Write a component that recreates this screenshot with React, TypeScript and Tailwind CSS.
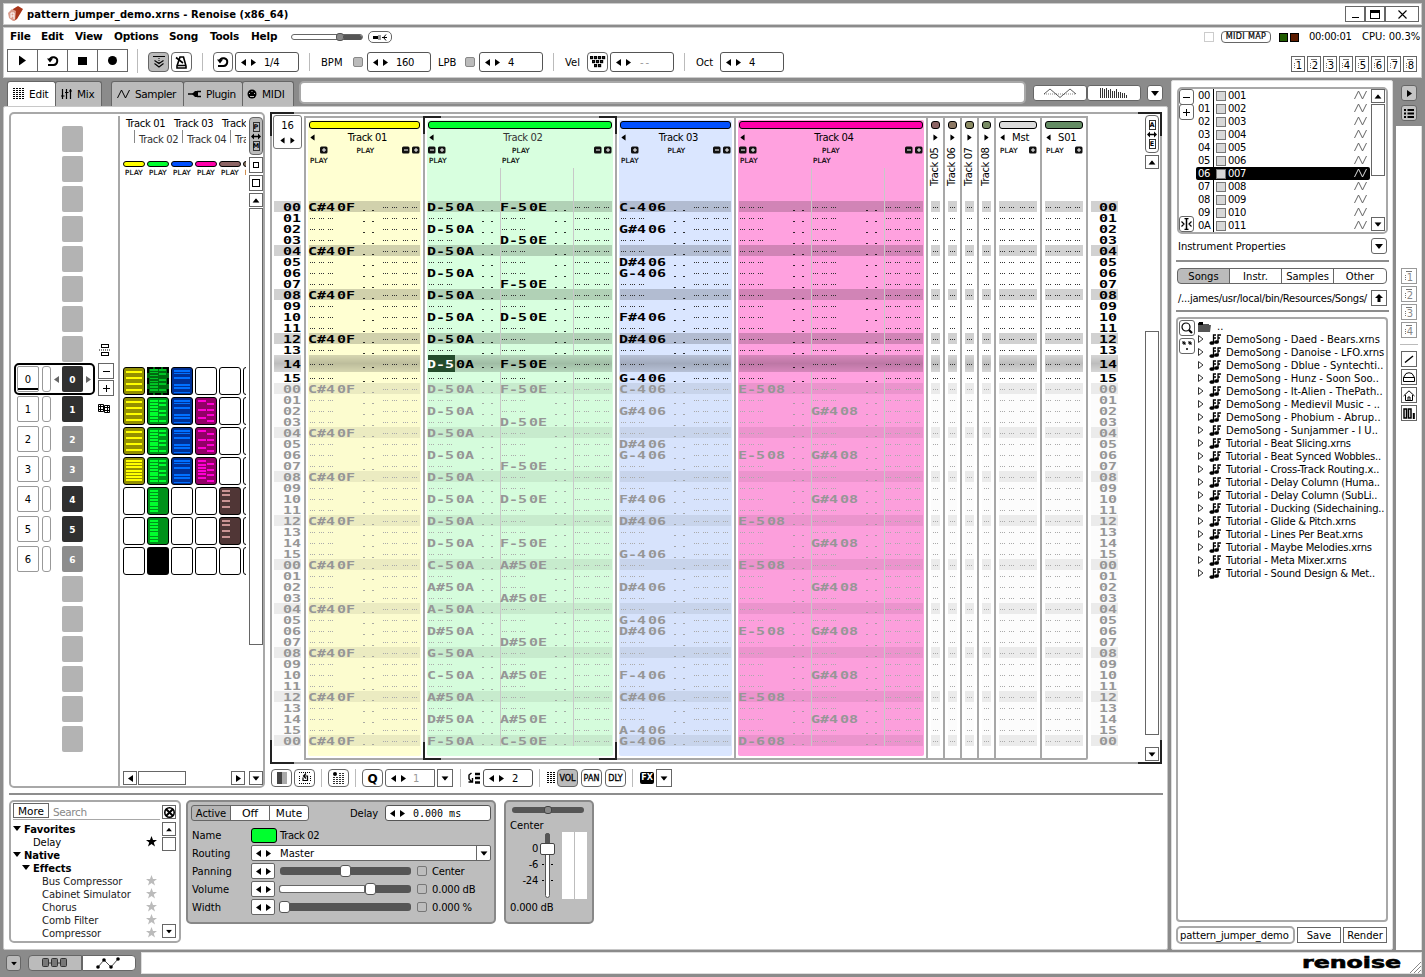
import React from "react";

type Dir = "l" | "r" | "u" | "d";
const triPoints: Record<Dir, string> = {
  l: "5,0 5,7 0,3.5",
  r: "0,0 0,7 5,3.5",
  u: "0,5 8,5 4,0",
  d: "0,0 8,0 4,5",
};

function Tri({ d, className = "" }: { d: Dir; className?: string }) {
  const v = d === "u" || d === "d";
  return (
    <svg className={"shrink-0 " + className} width={v ? 8 : 5} height={v ? 5 : 7} fill="currentColor">
      <polygon points={triPoints[d]} />
    </svg>
  );
}

function Btn({ className = "", children }: { className?: string; children?: React.ReactNode }) {
  return <div className={"flex shrink-0 items-center justify-center border border-[#666] " + className}>{children}</div>;
}

function Num({ value, className = "" }: { value: string; className?: string }) {
  return (
    <div className={"flex h-5 shrink-0 items-center rounded-[3px] border border-[#555] bg-white pl-[5px] " + className}>
      <Tri d="l" />
      <Tri d="r" className="ml-[5px]" />
      <span className="ml-[8px] tracking-[-0.3px]">{value}</span>
    </div>
  );
}

function Sep({ className = "" }: { className?: string }) {
  return <div className={"w-px shrink-0 bg-[#bbb] " + className} />;
}

/* ---------- title and transport ---------- */

function TitleBar() {
  return (
    <div className="flex h-[22px] w-[1419px] items-center border border-[#ccc] bg-white">
      <svg width="16" height="18" className="ml-[3px]" viewBox="0 0 16 18">
        <polygon points="6,4 11,1 16,4 10,14 7,16" fill="#a83418" />
        <polygon points="1,8 5,4 9,6 8,16 6,16 2,13" fill="#d99c8c" />
        <path d="M4 13 V8 H7 V14 M4 11 H7" stroke="#fff" fill="none" />
      </svg>
      <span className="ml-[4px] mt-[1px] flex-1 text-[10px] font-bold tracking-[0.05px]">pattern_jumper_demo.xrns - Renoise (x86_64)</span>
      <Btn className="h-4 w-5">
        <div className="mt-[6px] h-px w-[7px] bg-black" />
      </Btn>
      <Btn className="h-4 w-5">
        <div className="h-[9px] w-[10px] border border-t-[3px] border-black" />
      </Btn>
      <Btn className="mr-[2px] h-4 w-[34px]">
        <svg width="9" height="9" stroke="#000" strokeWidth="1.1">
          <path d="M0.5 0.5 L8.5 8.5 M8.5 0.5 L0.5 8.5" />
        </svg>
      </Btn>
    </div>
  );
}

function LoopIcon() {
  return (
    <svg width="12" height="12" viewBox="0 0 12 12" fill="none" stroke="#000" strokeWidth="2">
      <path d="M2.6 5 A3.9 3.9 0 1 1 6 10 M1 10 H6.5" />
      <polygon points="0,3.5 6,3.5 3,7.5" fill="#000" stroke="none" />
    </svg>
  );
}

function Transport() {
  const menu = [
    ["File", "w-[31px]"],
    ["Edit", "w-[34px]"],
    ["View", "w-[39px]"],
    ["Options", "w-[55px]"],
    ["Song", "w-[41px]"],
    ["Tools", "w-[41px]"],
    ["Help", "w-[40px]"],
  ];
  return (
    <div className="mt-[2px] flex h-[51px] w-[1419px] flex-col border border-[#ccc] bg-white">
      <div className="flex h-[18px] items-center pl-[6px]">
        {menu.map(([m, w]) => (
          <span key={m} className={"shrink-0 pb-[2px] text-[10.5px] font-bold tracking-[-0.2px] " + w}>
            {m}
          </span>
        ))}
        <div className="flex h-[6px] w-[72px] items-center rounded-full border border-[#666] bg-white">
          <div className="ml-[44px] h-[8px] w-[8px] shrink-0 rounded-[3px] border border-[#555] bg-[#888]" />
          <div className="h-[5px] flex-1 rounded-r-full bg-[#555]" />
        </div>
        <Btn className="ml-[5px] h-3 w-6 rounded-[5px]">
          <svg width="14" height="7" viewBox="0 0 14 7">
            <rect x="0" y="2" width="5" height="3" fill="#000" />
            <rect x="5" y="1" width="3" height="5" fill="#999" />
            <path d="M9 3.5 H14 M13 0.5 L10.5 3.5 L13 6.5" stroke="#000" fill="none" />
          </svg>
        </Btn>
        <div className="ml-[812px] h-[10px] w-[10px] border border-[#ccc]" />
        <Btn className="ml-[7px] h-[12px] w-[50px] rounded-[4px] text-[8px] [-webkit-text-stroke:0.2px_#000]">
          <span className="whitespace-nowrap tracking-[0.35px]">MIDI MAP</span>
        </Btn>
        <div className="ml-[8px] h-[9px] w-[9px] border border-black bg-[#205c00]" />
        <div className="ml-[2px] h-[9px] w-[9px] border border-black bg-[#5c1c00]" />
        <span className="ml-[10px] w-[53px] tracking-[-0.3px]">00:00:01</span>
        <span className="whitespace-nowrap tracking-[-0.05px]">CPU: 00.3%</span>
      </div>
      <div className="flex h-[29px] items-center pl-[3px] [&_span]:pt-[2px]">
        <Btn className="h-[23px] w-[31px]"><Tri d="r" className="scale-[1.4]" /></Btn>
        <Btn className="-ml-px h-[23px] w-[31px]"><LoopIcon /></Btn>
        <Btn className="-ml-px h-[23px] w-[31px]"><div className="h-[8px] w-[9px] bg-black" /></Btn>
        <Btn className="-ml-px h-[23px] w-[31px]"><div className="h-[9px] w-[9px] rounded-full bg-black" /></Btn>
        <Sep className="ml-[9px] h-6" />
        <Btn className="ml-[10px] mt-[3px] h-5 w-[21px] rounded-[4px] bg-[#bbb]">
          <svg width="12" height="12" fill="none" stroke="#000">
            <path d="M0 0.5 H12 M1.5 4.5 L6 7.5 L10.5 4.5 M1.5 7.5 L6 11 L10.5 7.5" strokeWidth="1.1" />
            <path d="M6 2 V8" strokeDasharray="1 1" />
          </svg>
        </Btn>
        <Btn className="ml-[2px] mt-[3px] h-5 w-[21px] rounded-[4px]">
          <svg width="13" height="13" viewBox="0 0 13 13">
            <path d="M5 1 H8.5 L11 10 V12 H2 V10 Z" fill="none" stroke="#000" strokeWidth="1.6" />
            <path d="M3 9.5 H11 M8 7 L1 1.5" stroke="#000" strokeWidth="1.6" />
          </svg>
        </Btn>
        <div className="ml-[10px] mt-[3px] flex items-center">
          <Sep className="h-[18px]" />
          <Btn className="ml-[10px] h-5 w-5 rounded-[4px]"><LoopIcon /></Btn>
          <Num value="1/4" className="ml-[2px] w-16" />
          <Sep className="ml-[10px] h-[18px]" />
          <span className="ml-[11px] w-8">BPM</span>
          <div className="h-[10px] w-[10px] rounded-[2px] border border-[#888] bg-[#bbb]" />
          <Num value="160" className="ml-[4px] w-16" />
          <span className="ml-[7px] w-[27px]">LPB</span>
          <div className="h-[10px] w-[10px] rounded-[2px] border border-[#888] bg-[#bbb]" />
          <Num value="4" className="ml-[4px] w-16" />
          <Sep className="ml-[10px] h-[18px]" />
          <span className="ml-[11px] w-[22px]">Vel</span>
          <Btn className="h-5 w-[21px] rounded-[4px]">
            <svg width="16" height="12" fill="none" stroke="#000" strokeWidth="1.2">
              {[0, 4, 8, 12].map((x) => <rect key={x} x={x + 0.6} y="0.6" width="2" height="2" />)}
              {[2, 6, 10].map((x) => <rect key={x} x={x + 0.6} y="4.6" width="2" height="2" />)}
              {[4, 8].map((x) => <rect key={x} x={x + 0.6} y="8.6" width="2" height="2" />)}
            </svg>
          </Btn>
          <div className="ml-[2px] flex h-5 w-16 items-center rounded-[3px] border border-[#555] pl-[5px]">
            <Tri d="l" />
            <Tri d="r" className="ml-[5px]" />
            <span className="ml-[9px] tracking-[2px] text-[#999]">--</span>
          </div>
          <Sep className="ml-[10px] h-[18px]" />
          <span className="ml-[11px] w-6">Oct</span>
          <Num value="4" className="w-16" />
        </div>
        <div className="ml-auto mr-[4px] mt-[7px] flex gap-[2px]">
          {[1, 2, 3, 4, 5, 6, 7, 8].map((n) => <Preset key={n} n={n} className="h-4 w-[14px] border-[#666] text-black" />)}
        </div>
      </div>
    </div>
  );
}

function Preset({ n, className }: { n: number; className: string }) {
  return (
    <div className={"flex flex-col items-center border " + className}>
      <div className="mt-[2px] h-px w-[6px] shrink-0 bg-[#777]" />
      <div className="flex items-center">
        <div className="mr-px h-[6px] w-px bg-[repeating-linear-gradient(#777_0_1px,transparent_1px_2px)]" />
        <div className="pt-px text-[10px] leading-[10px]">{n}</div>
      </div>
    </div>
  );
}

/* ---------- tabs ---------- */

function ZigZag({ className = "" }: { className?: string }) {
  return (
    <svg className={className} width="13" height="10" viewBox="0 0 13 10" fill="none" stroke="currentColor">
      <path d="M0.5 9 L4.5 1 L8.5 9 L12.5 1" />
    </svg>
  );
}

function Tabs() {
  const tab = "flex h-[25px] items-center rounded-t-[3px] border border-b-0 border-[#666] text-[10.5px] ";
  return (
    <div className="flex h-[28px] items-end pl-[4px]">
      <div className={tab + "w-[49px] bg-white"}>
        <svg width="11" height="12" className="ml-[5px]">
          {[1, 4, 7, 10].map((x) => <path key={x} d={`M${x} 0 V12`} stroke="#000" strokeWidth="2" strokeDasharray="1 1" />)}
        </svg>
        <span className="ml-[5px] tracking-[-0.2px]">Edit</span>
      </div>
      <div className={tab + "-ml-px w-[47px] bg-[#bbb]"}>
        <svg width="11" height="11" stroke="#000" strokeWidth="1.2" className="ml-[5px]">
          <path d="M1.5 0 V10 M5.5 0 V10 M9.5 0 V10 M0 7 H3.5 M4 3.5 H7.5 M8 2 H11.5" />
        </svg>
        <span className="ml-[5px] tracking-[-0.2px]">Mix</span>
      </div>
      <div className={tab + "ml-[9px] w-[73px] bg-[#bbb]"}>
        <ZigZag className="ml-[5px]" />
        <span className="ml-[5px] tracking-[-0.4px]">Sampler</span>
      </div>
      <div className={tab + "-ml-px w-[60px] bg-[#bbb]"}>
        <svg width="14" height="8" className="ml-[4px]">
          <path d="M0 4 H5 M9 1.5 H13 M9 6.5 H13" stroke="#000" strokeWidth="1.4" />
          <path d="M4 4 L7 1 H10 V7 H7 Z" fill="#000" />
        </svg>
        <span className="ml-[4px] tracking-[-0.4px]">Plugin</span>
      </div>
      <div className={tab + "-ml-px w-[52px] bg-[#bbb]"}>
        <svg width="10" height="10" className="ml-[4px]">
          <circle cx="5" cy="5" r="4.5" />
          <path d="M2 4.5 H3 M7 4.5 H8 M4.5 2.5 H5.5 M3 7.5 H7" stroke="#bbb" />
        </svg>
        <span className="ml-[5px] tracking-[-0.2px]">MIDI</span>
      </div>
      <div className="mb-[2px] ml-[5px] h-[23px] w-[727px] rounded-[5px] border-2 border-[#a8a8a8] bg-white" />
      <Btn className="mb-[5px] ml-[7px] h-4 w-[54px] rounded-[3px] bg-white">
        <svg width="34" height="10" fill="none" stroke="#333">
          <path d="M1 6 L7 1 L17 9.5 L27 1 L33 6" strokeWidth="0.8" />
          <path d="M1 6 H33" strokeWidth="0.6" strokeDasharray="1 1" />
        </svg>
      </Btn>
      <Btn className="mb-[5px] h-4 w-[54px] rounded-[3px] bg-white">
        <svg width="28" height="10" stroke="#333">
          {[0, 0, 1, 0, 2, 1, 3, 3, 1, 4, 4, 5, 5, 7].map((t, i) => <path key={i} d={`M${i * 2 + 0.5} ${t} V10`} />)}
        </svg>
      </Btn>
      <Btn className="mb-[5px] ml-[6px] h-4 w-4 rounded-[3px] bg-white"><Tri d="d" /></Btn>
    </div>
  );
}

/* ---------- pattern matrix ---------- */

const evens = [0, 2, 4, 6, 8, 10, 12, 14];
const greenB = [0, 3, 7, 10, 14];
type CellKind = "y" | "y2" | "g" | "g1" | "b" | "p" | "p2" | "n" | "k" | "s" | "";
const cellStyle: Record<string, { bg: string; line: string; cols: number[][] }> = {
  y: { bg: "bg-[#939000]", line: "bg-[#ffff00]", cols: [[1, 5, 9, 13]] },
  y2: { bg: "bg-[#939000]", line: "bg-[#ffff00]", cols: [[0, 2, 4, 7, 9, 11, 13]] },
  g: { bg: "bg-[#00911a]", line: "bg-[#00ff2e]", cols: [evens, greenB] },
  s: { bg: "bg-[#006a10]", line: "bg-[#00c424]", cols: [evens, greenB] },
  g1: { bg: "bg-[#00911a]", line: "bg-[#00ff2e]", cols: [evens, []] },
  b: { bg: "bg-[#003095]", line: "bg-[#0070ff]", cols: [[0, 2, 5, 10, 12, 15]] },
  p: { bg: "bg-[#920066]", line: "bg-[#ff00d4]", cols: [[0, 6, 12], [2, 6, 10, 14]] },
  p2: { bg: "bg-[#920066]", line: "bg-[#ff00d4]", cols: [[0, 3, 5, 7, 9, 12], [2, 6, 10, 14]] },
  n: { bg: "bg-[#503636]", line: "bg-[#cc9494]", cols: [[0, 3, 7, 11], []] },
};

function Cell({ k }: { k: CellKind }) {
  if (k === "") return <div className="h-7 w-[22px] shrink-0 rounded-[3px] border border-black bg-white" />;
  if (k === "k") return <div className="h-7 w-[22px] shrink-0 rounded-[3px] bg-black" />;
  const c = cellStyle[k];
  const thin = k === "b" || k === "s";
  return (
    <div
      className={
        "flex h-7 w-[22px] shrink-0 gap-px " +
        c.bg +
        (k === "s" ? " border-2 border-dashed border-black px-px py-0" : " rounded-[3px] border border-black px-[2px] py-[2px]")
      }
    >
      {c.cols.map((col, i) => (
        <div key={i} className="flex flex-1 flex-col">
          {col.map((s, j) => (
            <div
              key={j}
              className={"shrink-0 " + c.line}
              style={{ height: thin ? 1.5 : 2, marginTop: j === 0 ? s * 1.45 : (s - col[j - 1]) * 1.45 - (thin ? 1.5 : 2) }}
            />
          ))}
        </div>
      ))}
    </div>
  );
}

const matrixRows: CellKind[][] = [
  ["y", "s", "b", "", "", ""],
  ["y", "g", "b", "p", "", ""],
  ["y", "g", "b", "p", "", ""],
  ["y2", "g", "b", "p2", "", ""],
  ["", "g1", "", "", "n", ""],
  ["", "g1", "", "", "n", ""],
  ["", "k", "", "", "", ""],
];

function SeqBlocks({ count }: { count: number }) {
  return (
    <>
      {Array.from({ length: count }, (_, i) => (
        <div key={i} className="ml-[51px] h-[26px] w-[21px] shrink-0 rounded-[2px] bg-[#b3b3b3]" />
      ))}
    </>
  );
}

function Matrix() {
  const bars = ["bg-[#ffff00]", "bg-[#00ff2e]", "bg-[#0050ff]", "bg-[#ff00aa]", "bg-[#8c6464]", "bg-[#8c7864]"];
  return (
    <div className="flex h-[676px] w-[256px] rounded-[5px] border-2 border-[#a8a8a8] bg-white">
      {/* sequence slots */}
      <div className="relative flex w-[85px] flex-col gap-[4px] pt-[12px]">
        <SeqBlocks count={8} />
        {[0, 1, 2, 3, 4, 5, 6].map((n) => (
          <div key={n} className="flex h-[26px] shrink-0 items-stretch pl-[6px]">
            <div className="flex w-[22px] flex-col items-center justify-center rounded-[2px] border border-[#999]">
              <span className={n === 0 ? "mt-[3px] leading-[14px]" : "leading-[14px]"}>{n}</span>
              {n === 0 && <div className="mt-px h-[2px] w-5 shrink-0 bg-black" />}
            </div>
            <div className="ml-[3px] w-[9px] rounded-[3px] border border-[#999]" />
            <div
              className={
                "ml-[11px] flex w-[21px] items-center justify-center rounded-[2px] pt-[2px] text-[9px] font-bold text-white " +
                ([2, 3, 6].includes(n) ? "bg-[#8d8d8d]" : "bg-[#303030]")
              }
            >
              {n}
            </div>
          </div>
        ))}
        <SeqBlocks count={6} />
        <div className="absolute left-[3px] top-[249px] flex h-8 w-[81px] items-center rounded-[5px] border-2 border-black text-[#666]">
          <Tri d="l" className="ml-[38px]" />
          <Tri d="r" className="ml-[27px]" />
        </div>
      </div>
      <div className="flex w-[22px] flex-col items-start pl-[2px] pt-[230px]">
        <svg width="12" height="12" fill="none" stroke="#000" className="ml-px shrink-0">
          <rect x="2.5" y="0.5" width="7" height="3" />
          <rect x="2.5" y="8.5" width="7" height="3" />
          <path d="M0 6 H12" strokeDasharray="1 1" />
        </svg>
        <Btn className="mt-[7px] h-4 w-4"><div className="h-px w-[7px] bg-black" /></Btn>
        <Btn className="mt-px h-4 w-4">
          <svg width="7" height="7" stroke="#000"><path d="M0 3.5 H7 M3.5 0 V7" /></svg>
        </Btn>
        <svg width="13" height="10" className="mt-[8px] shrink-0" fill="none" stroke="#000">
          <path d="M0.5 0.5 H5.5 V7.5 H0.5 Z M0.5 2.5 H5.5 M0.5 5.5 H5.5 M2.5 0 V8 M6.5 1.5 H11.5 V8.5 H6.5 Z M6.5 3.5 H12 M6.5 6.5 H12 M9.5 1 V9" />
        </svg>
      </div>
      <div className="mt-[2px] w-[2px] bg-[#a8a8a8]" />
      {/* track cells */}
      <div className="flex w-[129px] flex-col pl-[3px]">
        <div className="flex h-[16px] w-[123px] gap-[8px] overflow-hidden whitespace-nowrap pl-[3px] leading-[15px] tracking-[-0.35px]">
          {["Track 01", "Track 03", "Track 05"].map((t) => <span key={t} className="w-10 shrink-0">{t}</span>)}
        </div>
        <div className="flex h-[17px] w-[123px] overflow-hidden whitespace-nowrap pl-[11px] leading-[15px] tracking-[-0.35px] text-[#333]">
          {["Track 02", "Track 04", "Track 06"].map((t) => (
            <div key={t} className="flex w-12 shrink-0">
              <div className="h-[13px] w-px bg-[#888]" />
              <span className="ml-[4px]">{t}</span>
            </div>
          ))}
        </div>
        <div className="mt-[14px] flex w-[123px] shrink-0 gap-[2px] overflow-hidden">
          {bars.map((b) => (
            <div key={b} className="flex w-[22px] shrink-0 flex-col items-center">
              <div className={"h-[6px] w-[22px] shrink-0 rounded-[3px] border border-black " + b} />
              <span className="text-[7px] leading-[9px] tracking-[0.25px] text-black [-webkit-text-stroke:0.2px_#000]">PLAY</span>
            </div>
          ))}
        </div>
        <div className="mt-[189px] flex w-[123px] flex-col gap-[2px] overflow-hidden">
          {matrixRows.map((r, i) => (
            <div key={i} className="flex gap-[2px]">
              {r.map((k, j) => <Cell key={j} k={k} />)}
            </div>
          ))}
        </div>
        <div className="mb-px mt-auto flex h-[14px]">
          <Btn className="h-[14px] w-[14px]"><Tri d="l" /></Btn>
          <div className="ml-px h-[14px] w-[48px] border border-[#666]" />
          <Btn className="ml-[45px] h-[14px] w-[14px]"><Tri d="r" /></Btn>
        </div>
      </div>
      <div className="flex w-[14px] flex-col pt-[3px]">
        <Btn className="h-[38px] w-[14px] rounded-[4px] bg-[#bbb]"><RangeIcon top="P" bottom="M" /></Btn>
        <Btn className="mt-[2px] h-4 w-[14px]"><div className="h-[6px] w-[6px] border border-black" /></Btn>
        <Btn className="mt-[2px] h-4 w-[14px]"><div className="h-2 w-2 border border-black" /></Btn>
        <Btn className="mt-[2px] h-[14px] w-[14px]"><Tri d="u" className="scale-90" /></Btn>
        <div className="mt-px h-[437px] w-[14px] border border-[#666]" />
        <Btn className="mb-px mt-auto h-[14px] w-[14px]"><Tri d="d" className="scale-90" /></Btn>
      </div>
    </div>
  );
}

function RangeIcon({ top, bottom }: { top: string; bottom: string }) {
  return (
    <div className="flex flex-col items-center gap-px text-[6.5px] font-bold leading-[8px]">
      <div className="flex h-[10px] w-[7px] items-center justify-center border border-[#333]">{top}</div>
      <svg width="10" height="7"><path d="M0 3.5 L3 0.5 V2.8 H7 V0.5 L10 3.5 L7 6.5 V4.2 H3 V6.5 Z" /></svg>
      <div className="flex h-[10px] w-[7px] items-center justify-center border border-[#333]">{bottom}</div>
    </div>
  );
}

/* ---------- pattern editor ---------- */

type Notes = Record<number, string>;
const every = (steps: number[], n: string): Notes => Object.fromEntries(steps.map((s) => [s, n]));
const shift = (n: Notes, by: number): Notes => Object.fromEntries(Object.entries(n).map(([k, v]) => [Number(k) + by, v]));

const t2b: Notes = { 0: "F-50E", 3: "D-50E", 7: "F-50E", 10: "D-50E", 14: "F-50E" };
const t3: Notes = { 0: "C-406", 2: "G#406", 5: "D#406", 6: "G-406", 10: "F#406", 12: "D#406", 15: "G-406" };
const t1All = every([0, 4, 8, 12, 16, 20, 24, 28, 32, 36, 40, 44, 48], "C#40F");
const t2aAll: Notes = {
  ...every(evens, "D-50A"),
  ...shift(every(evens, "D-50A"), 16),
  32: "C-50A", 34: "A#50A", 36: "A-50A", 38: "D#50A", 40: "G-50A", 42: "C-50A", 44: "A#50A", 46: "D#50A", 48: "F-50A",
};
const t2bAll: Notes = { ...t2b, ...shift(t2b, 16), 32: "A#50E", 35: "A#50E", 39: "D#50E", 42: "A#50E", 46: "A#50E", 48: "C-50E" };
const t3All: Notes = { ...t3, ...shift(t3, 16), 34: "D#406", 37: "G-406", 38: "D#406", 42: "F-406", 44: "C#406", 47: "A-406", 48: "G-406" };
const t4aAll: Notes = { ...every([16, 22, 28, 32, 38, 44], "E-508"), 48: "D-608" };
const t4bAll: Notes = every([18, 22, 26, 30, 34, 38, 42, 46], "G#408");
const lines = Array.from({ length: 49 }, (_, i) => i);

function lineClass(i: number) {
  const tall = i === 14;
  const faded = i > 15;
  return (
    "flex shrink-0 items-center " +
    (tall
      ? "h-[17px] bg-[linear-gradient(rgba(0,0,0,.16),rgba(0,0,0,.26),rgba(0,0,0,.16))] "
      : i % 4 === 0
        ? faded ? "h-[11px] bg-black/[0.08] " : "h-[11px] bg-black/[0.18] "
        : faded ? "h-[11px] bg-black/[0.01] " : "h-[11px] ") +
    (faded ? "text-[#969696]" : "text-black")
  );
}

function Wide({ text, className = "" }: { text: string; className?: string }) {
  return (
    <span
      className={
        "shrink-0 origin-left scale-x-[1.36] whitespace-pre font-['DejaVu_Sans_Mono','Liberation_Mono',monospace] text-[11px] font-bold leading-[11px] " +
        className
      }
    >
      {text}
    </span>
  );
}

function Dots({ faded, className = "" }: { faded: boolean; className?: string }) {
  return (
    <div
      className={
        "h-px w-[5px] shrink-0 " +
        (faded
          ? "bg-[repeating-linear-gradient(90deg,#aaa_0_1px,transparent_1px_2px)] "
          : "bg-[repeating-linear-gradient(90deg,#333_0_1px,transparent_1px_2px)] ") +
        className
      }
    />
  );
}

function NoteCell({ note, faded, selected }: { note?: string; faded: boolean; selected?: boolean }) {
  return (
    <div className="flex h-full w-[72px] shrink-0 items-center">
      {note ? (
        <>
          <div className={"flex h-full w-[27px] shrink-0 items-center " + (selected ? "bg-[#244c2c] text-white" : "")}>
            <Wide text={note.slice(0, 3)} className="-ml-px w-[20px]" />
          </div>
          <Wide text={note.slice(3)} className="ml-px w-[26px]" />
        </>
      ) : (
        <>
          <Dots faded={faded} className="ml-px mt-px" />
          <Dots faded={faded} className="ml-[4px] mt-px" />
          <Dots faded={faded} className="ml-[4px] mr-[30px] mt-px" />
        </>
      )}
      <div className="mt-[8px] h-px w-[2px] bg-current opacity-80" />
      <div className="ml-[7px] mt-[8px] h-px w-[2px] bg-current opacity-80" />
    </div>
  );
}

function FxCell({ faded }: { faded: boolean }) {
  return (
    <div className="flex items-center pt-px">
      <Dots faded={faded} className="ml-px" />
      <Dots faded={faded} className="ml-[4px]" />
      <Dots faded={faded} className="ml-[6px]" />
      <Dots faded={faded} className="ml-[4px]" />
    </div>
  );
}

function Box({ plus }: { plus?: boolean }) {
  return (
    <svg width="8" height="8" viewBox="0 0 8 8" className="shrink-0">
      <rect y="0.5" width="7.5" height="7" rx="1.5" fill="#111" />
      <path d={plus ? "M2 4 H6 M4 2 V6" : "M2 4 H6"} stroke="#fff" />
    </svg>
  );
}

interface TrackProps {
  name: string;
  width: string;
  bg: string;
  bar: string;
  cols: Notes[];
  removable?: boolean;
  active?: boolean;
}

const tiny = "text-[7px] tracking-[0.25px] [-webkit-text-stroke:0.2px_#000] ";

function Track({ name, width, bg, bar, cols, removable, active }: TrackProps) {
  const two = cols.length > 1;
  return (
    <div className={"relative h-[644px] shrink-0 border-y-2 border-l-2 border-[#a8a8a8] p-[2px] " + width}>
      {active && (
        <>
          <div className="absolute -left-[2px] -top-[2px] h-[18px] w-[18px] border-l-2 border-t-2 border-[#222]" />
          <div className="absolute -right-[2px] -top-[2px] h-[18px] w-[18px] border-r-2 border-t-2 border-[#222]" />
          <div className="absolute -bottom-[2px] -left-[2px] h-[18px] w-[18px] border-b-2 border-l-2 border-[#222]" />
          <div className="absolute -bottom-[2px] -right-[2px] h-[18px] w-[18px] border-b-2 border-r-2 border-[#222]" />
        </>
      )}
      <div className={"flex h-[636px] flex-col rounded-[2px] p-px " + bg}>
        <div className={"h-2 shrink-0 rounded-[3px] border border-black " + bar} />
        <div className="flex h-4 shrink-0 items-center">
          <Tri d="l" className="ml-px scale-90" />
          <span className={"flex-1 text-center tracking-[-0.35px] " + (active ? "text-[#333]" : "")}>{name}</span>
        </div>
        <div className={"flex h-[10px] shrink-0 items-center gap-[2px] " + tiny}>
          {removable ? <Box /> : <div className="w-[9px] shrink-0" />}
          <Box plus />
          <span className={"flex-1 text-center " + (active ? "pl-[2px]" : two ? "" : "pl-px")}>PLAY</span>
          <Box />
          <Box plus />
        </div>
        <div className={"flex h-[10px] shrink-0 items-center pl-px " + tiny}>
          {cols.map((_, i) => <span key={i} className="w-[73px]">PLAY</span>)}
        </div>
        <div className="flex h-[36px] shrink-0 items-end">
          {two && cols.map((_, i) => <div key={i} className="h-[33px] w-[73px] border-r border-[#c8c8c8]" />)}
        </div>
        {lines.map((i) => (
          <div key={i} className={lineClass(i)}>
            {cols.map((c, j) => (
              <React.Fragment key={j}>
                <NoteCell note={c[i]} faded={i > 15} selected={active && i === 14 && j === 0} />
                <div className={"h-full w-px shrink-0 " + (two && i !== 14 ? "bg-[#c8c8c8]" : "")} />
              </React.Fragment>
            ))}
            <FxCell faded={i > 15} />
          </div>
        ))}
      </div>
    </div>
  );
}

function NarrowTrack({ name, bar }: { name: string; bar: string }) {
  return (
    <div className="flex h-[644px] w-[17px] shrink-0 flex-col border-y-2 border-l-2 border-[#a8a8a8] px-[3px] pt-[3px]">
      <div className={"h-2 w-[9px] shrink-0 rounded-[3px] border border-black " + bar} />
      <div className="flex h-4 shrink-0 items-center pl-[2px]"><Tri d="r" className="scale-90" /></div>
      <div className="flex h-[56px] shrink-0 justify-start">
        <div className="-ml-px h-[41px] rotate-180 whitespace-nowrap text-[10px] leading-[9px] tracking-[-0.45px] [writing-mode:vertical-rl]">{name}</div>
      </div>
      {lines.map((i) => (
        <div key={i} className={lineClass(i) + " justify-center"}><Dots faded={i > 15} className="mt-px" /></div>
      ))}
    </div>
  );
}

function SendTrack({ name, bar, last }: { name: string; bar: string; last?: boolean }) {
  return (
    <div className={"flex h-[644px] shrink-0 flex-col border-y-2 border-l-2 border-[#a8a8a8] px-[3px] pt-[3px] " + (last ? "w-12 rounded-br-[2px] border-r-2" : "w-[46px]")}>
      <div className={"h-2 w-[38px] shrink-0 rounded-[3px] border border-black " + bar} />
      <div className="flex h-4 shrink-0 items-center">
        <Tri d="l" className="ml-px scale-90" />
        <span className="ml-[7px] tracking-[-0.2px]">{name}</span>
      </div>
      <div className={"flex h-[10px] shrink-0 items-center pl-px " + tiny}>
        <span className="w-[29px]">PLAY</span>
        <Box plus />
      </div>
      <div className="h-[46px] shrink-0" />
      {lines.map((i) => (
        <div key={i} className={lineClass(i) + " w-[38px]"}><FxCell faded={i > 15} /></div>
      ))}
    </div>
  );
}

function LineNumbers({ className, pad }: { className: string; pad: string }) {
  return (
    <div className={className}>
      {lines.map((i) => (
        <div key={i} className={lineClass(i) + " " + pad}>
          <Wide text={String(i % 16).padStart(2, "0")} />
        </div>
      ))}
    </div>
  );
}

function PatternEditor() {
  return (
    <div className="relative flex h-[652px] w-[892px] border-2 border-[#a8a8a8]">
      <div className="absolute -left-[2px] -top-[2px] h-6 w-6 border-l-2 border-t-2 border-[#222]" />
      <div className="absolute -right-[2px] -top-[2px] h-6 w-6 border-r-2 border-t-2 border-[#222]" />
      <div className="absolute -bottom-[2px] -left-[2px] h-6 w-6 border-b-2 border-l-2 border-[#222]" />
      <div className="absolute -bottom-[2px] -right-[2px] h-6 w-6 border-b-2 border-r-2 border-[#222]" />
      <div className="flex w-[32px] flex-col">
        <div className="ml-px mt-px flex h-[34px] w-[29px] flex-col items-center rounded-[3px] border border-[#777] pt-px">
          <span className="leading-[13px] tracking-[-0.2px]">16</span>
          <div className="mt-[5px] flex gap-[5px]"><Tri d="l" className="scale-90" /><Tri d="r" className="scale-90" /></div>
        </div>
        <LineNumbers className="ml-[2px] mt-[52px] w-[27px]" pad="pl-[9px]" />
      </div>
      <div className="flex pt-[2px]">
        <Track name="Track 01" width="w-[119px]" bg="bg-[#ffffd2]" bar="bg-[#ffff00]" cols={[t1All]} />
        <Track name="Track 02" width="w-[192px] z-10" bg="bg-[#d8ffdf]" bar="bg-[#00ff2e]" cols={[t2aAll, t2bAll]} removable active />
        <Track name="Track 03" width="w-[119px]" bg="bg-[#dae6ff]" bar="bg-[#0050ff]" cols={[t3All]} />
        <Track name="Track 04" width="w-[192px]" bg="bg-[#ffa1df]" bar="bg-[#ff00aa]" cols={[t4aAll, t4bAll]} removable />
        <NarrowTrack name="Track 05" bar="bg-[#8c6464]" />
        <NarrowTrack name="Track 06" bar="bg-[#8c7864]" />
        <NarrowTrack name="Track 07" bar="bg-[#8c8c64]" />
        <NarrowTrack name="Track 08" bar="bg-[#788c64]" />
        <SendTrack name="Mst" bar="bg-[#dcdcdc]" />
        <SendTrack name="S01" bar="bg-[#648c64]" last />
      </div>
      <LineNumbers className="ml-[3px] mt-[87px] w-[27px]" pad="pl-[8px]" />
      <div className="ml-auto flex w-[15px] flex-col">
        <Btn className="mt-px h-[38px] w-[14px] rounded-[4px]"><RangeIcon top="A" bottom="E" /></Btn>
        <Btn className="mt-[2px] h-[14px] w-[14px]"><Tri d="u" className="scale-90" /></Btn>
        <div className="mt-[162px] h-[404px] w-[14px] border border-[#666]" />
        <Btn className="mb-px mt-auto h-[14px] w-[14px]"><Tri d="d" className="scale-90" /></Btn>
      </div>
    </div>
  );
}

function DotGrid() {
  return (
    <svg width="10" height="12" className="ml-[7px] shrink-0">
      {[1, 4, 7].map((x) => <path key={x} d={`M${x} 0 V12`} stroke="#000" strokeWidth="2" strokeDasharray="1 1" />)}
    </svg>
  );
}

function PatternToolbar() {
  const b = "h-[18px] rounded-[4px] ";
  const mode = b + "w-[21px] pt-px text-[8px] [-webkit-text-stroke:0.3px_#000] ";
  return (
    <div className="mt-[4px] flex h-5 items-center pl-px">
      <Btn className={b + "w-[21px]"}>
        <div className="h-3 w-[5px] bg-[#444]" /><div className="h-3 w-[5px] bg-[#aaa]" />
      </Btn>
      <Btn className={b + "ml-[2px] w-[21px]"}>
        <svg width="12" height="12" fill="none" stroke="#000">
          <path d="M0 0.5 H12 M0 11.5 H12 M0.5 4 V9 M11.5 4 V9" strokeDasharray="1 1" />
          <path d="M4 5.5 V8.5 H8.5 V4 H5 M7 1.5 L4.5 4 L7 6.5" strokeWidth="1.2" />
        </svg>
      </Btn>
      <Sep className="ml-[6px] h-[18px]" />
      <Btn className={b + "ml-[6px] w-[21px]"}>
        <svg width="12" height="12">
          <circle cx="2" cy="2" r="2" />
          {[1, 4, 7, 10].map((x, i) => <path key={x} d={`M${x} ${i < 2 ? 5 : 1} V12`} stroke="#000" strokeWidth="1.6" strokeDasharray="1 1" />)}
        </svg>
      </Btn>
      <Sep className="ml-[6px] h-[18px]" />
      <Btn className={b + "ml-[6px] w-[21px] pt-px text-[12px] font-bold"}>Q</Btn>
      <div className="ml-[2px] flex h-[18px] w-[50px] items-center rounded-l-[3px] border border-[#666] pl-[5px]">
        <Tri d="l" /><Tri d="r" className="ml-[5px]" /><span className="ml-[7px] text-[#999]">1</span>
      </div>
      <Btn className="ml-[2px] h-[18px] w-[16px]"><Tri d="d" className="scale-90" /></Btn>
      <Sep className="ml-[7px] h-[18px]" />
      <svg width="14" height="13" className="ml-[6px]" fill="none" stroke="#000">
        <path d="M4.5 1 L2 3 V7 L4.5 9.5 M5.5 6 V10 H1.5" strokeWidth="1.4" />
        <path d="M8 2 H13 M8 6 H13 M8 10.5 H13" strokeWidth="2.5" />
      </svg>
      <Num value="2" className="ml-[2px] !h-[18px] w-[50px]" />
      <Sep className="ml-[6px] h-[18px]" />
      <DotGrid />
      <Btn className={mode + "bg-[#bbb]"}>VOL</Btn>
      <Btn className={mode + "ml-[3px]"}>PAN</Btn>
      <Btn className={mode + "ml-[3px]"}>DLY</Btn>
      <Sep className="ml-[6px] h-[18px]" />
      <div className="ml-[7px] flex h-[12px] w-[14px] items-center justify-center rounded-[2px] bg-black text-[8px] font-bold text-white">FX</div>
      <Btn className="ml-[2px] h-[18px] w-[16px]"><Tri d="d" className="scale-90" /></Btn>
    </div>
  );
}

/* ---------- lower panels ---------- */

function Caret() {
  return <svg width="8" height="6" className="shrink-0"><polygon points="0,0 8,0 4,5" /></svg>;
}

function Star({ className }: { className: string }) {
  return (
    <svg width="11" height="11" viewBox="0 0 11 11" className={"mr-[3px] " + className} fill="currentColor">
      <polygon points="5.5,0 7,4 11,4 7.8,6.5 9,10.5 5.5,8 2,10.5 3.2,6.5 0,4 4,4" />
    </svg>
  );
}

function Browser() {
  const head = "flex h-[13px] items-center font-bold tracking-[-0.1px] ";
  return (
    <div className="flex h-[143px] w-[172px] rounded-[5px] border-2 border-[#a8a8a8] bg-white">
      <div className="w-[149px]">
        <div className="ml-[2px] flex h-[18px] items-end border-b border-[#a8a8a8]">
          <Btn className="mb-px mt-[3px] h-[15px] w-[36px] pt-px text-[10.5px]">More</Btn>
          <span className="ml-[4px] text-[10.5px] leading-[14px] tracking-[-0.4px] text-[#888]">Search</span>
        </div>
        <div className="mt-[2px] flex flex-col leading-[13px]">
          <div className={head + "pl-[2px]"}><Caret /><span className="ml-[3px]">Favorites</span></div>
          <div className="flex h-[13px] items-center justify-between pl-[22px] tracking-[-0.1px]">
            <span>Delay</span><Star className="text-black" />
          </div>
          <div className={head + "pl-[2px]"}><Caret /><span className="ml-[3px]">Native</span></div>
          <div className={head + "pl-[11px]"}><Caret /><span className="ml-[3px]">Effects</span></div>
          {["Bus Compressor", "Cabinet Simulator", "Chorus", "Comb Filter", "Compressor"].map((n) => (
            <div key={n} className="flex h-[13px] items-center justify-between pl-[31px] tracking-[-0.08px] text-[#222]">
              <span className="whitespace-nowrap">{n}</span><Star className="text-[#bbb]" />
            </div>
          ))}
        </div>
      </div>
      <div className="ml-[2px] flex w-[14px] flex-col pt-[3px]">
        <Btn className="h-[14px] w-[14px]">
          <svg width="11" height="11"><circle cx="5.5" cy="5.5" r="4.7" fill="none" stroke="#000" strokeWidth="1.6" /><path d="M2 2 L9 9 M9 2 L2 9" stroke="#000" strokeWidth="2" /></svg>
        </Btn>
        <Btn className="mt-[3px] h-[14px] w-[14px]"><Tri d="u" className="scale-75" /></Btn>
        <div className="mt-px h-[14px] w-[14px] border border-[#666]" />
        <Btn className="mb-[3px] mt-auto h-[14px] w-[14px]"><Tri d="d" className="scale-75" /></Btn>
      </div>
    </div>
  );
}

function Arrows() {
  return (
    <Btn className="h-4 w-6 gap-[5px] rounded-[2px] bg-white"><Tri d="l" /><Tri d="r" /></Btn>
  );
}

function ParamRow({ label, value, children }: { label: string; value: string; children: React.ReactNode }) {
  return (
    <div className="flex h-[18px] items-center">
      <span className="w-[59px]">{label}</span>
      <Arrows />
      {children}
      <div className="ml-[6px] h-[10px] w-[10px] rounded-[2px] border border-[#777]" />
      <span className="ml-[5px] tracking-[-0.2px]">{value}</span>
    </div>
  );
}

const knob = "h-3 w-[11px] shrink-0 rounded-[3px] border border-[#555] bg-white";

function TrackDevice() {
  return (
    <div className="ml-[5px] h-[124px] w-[310px] rounded-[5px] border-2 border-[#888] bg-[#bdbdbd] pl-[4px] pt-[3px]">
      <div className="-ml-px flex h-4 items-center">
        <Btn className="h-4 w-[40px] rounded-l-[3px] bg-[#b5b5b5] pt-px tracking-[-0.1px]">Active</Btn>
        <Btn className="-ml-px h-4 w-[40px] bg-white pt-px text-[11px]">Off</Btn>
        <Btn className="-ml-px h-4 w-[40px] rounded-r-[3px] bg-white text-[10.5px]">Mute</Btn>
        <span className="ml-[41px] w-[35px] tracking-[-0.1px]">Delay</span>
        <div className="flex h-4 w-[106px] items-center rounded-[3px] border border-[#555] bg-white pl-[4px]">
          <Tri d="l" /><Tri d="r" className="ml-[5px]" />
          <span className="ml-[8px] font-['DejaVu_Sans_Mono',monospace]">0.000 ms</span>
        </div>
      </div>
      <div className="mt-[5px] flex h-[18px] items-center">
        <span className="w-[59px]">Name</span>
        <div className="h-[15px] w-[26px] rounded-[3px] border border-black bg-[#00ff2e]" />
        <span className="ml-[3px] tracking-[-0.35px]">Track 02</span>
      </div>
      <div className="flex h-[18px] items-center">
        <span className="w-[59px]">Routing</span>
        <div className="flex h-4 w-[240px] items-center rounded-[2px] border border-[#666] bg-white pl-[4px]">
          <Tri d="l" /><Tri d="r" className="ml-[5px]" />
          <span className="ml-[9px] flex-1">Master</span>
          <div className="flex h-full w-[14px] items-center justify-center border-l border-[#666]"><Tri d="d" className="scale-90" /></div>
        </div>
      </div>
      <ParamRow label="Panning" value="Center">
        <div className="ml-[5px] flex h-2 w-[131px] items-center rounded-[3px] bg-[#555] pl-[60px]"><div className={knob} /></div>
      </ParamRow>
      <ParamRow label="Volume" value="0.000 dB">
        <div className="ml-[4px] flex h-2 w-[132px] items-center rounded-[3px] bg-[#555]">
          <div className="h-2 w-[86px] rounded-l-[3px] border border-[#666] bg-white" />
          <div className={knob} />
        </div>
      </ParamRow>
      <ParamRow label="Width" value="0.000 %">
        <div className="ml-[4px] flex h-2 w-[132px] items-center rounded-[3px] bg-[#555]"><div className={knob} /></div>
      </ParamRow>
    </div>
  );
}

function MixerStrip() {
  return (
    <div className="ml-[8px] h-[124px] w-[90px] rounded-[5px] border-2 border-[#888] bg-[#bdbdbd] pl-[4px] pt-[5px]">
      <div className="ml-[2px] flex h-[6px] w-[72px] items-center justify-center rounded-full bg-[#555]">
        <div className="h-2 w-2 rounded-[3px] border border-[#444] bg-[#888]" />
      </div>
      <div className="mt-[6px] leading-[13px]">Center</div>
      <div className="flex h-[68px]">
        <div className="flex w-[28px] flex-col items-end pt-[8px] text-[10px] leading-[14px] tracking-[-0.3px]">
          <span>0</span><span>-6</span><span>-24</span>
        </div>
        <div className="relative ml-[6px] flex w-[7px] justify-center">
          <div className="mt-px h-[65px] w-[5px] rounded-[3px] border border-[#555] bg-white" />
          <div className="absolute top-px h-3 w-[5px] rounded-t bg-[#555]" />
          <div className="absolute top-[11px] h-3 w-[15px] rounded-[2px] border border-[#444] bg-white" />
          <div className="absolute -left-[2px] top-[32px] h-px w-[2px] bg-black" />
          <div className="absolute -left-[2px] top-[48px] h-px w-[2px] bg-black" />
          <div className="absolute -right-[2px] top-[32px] h-px w-[2px] bg-black" />
          <div className="absolute -right-[2px] top-[48px] h-px w-[2px] bg-black" />
        </div>
        <div className="ml-[11px] flex h-[67px] gap-px">
          <div className="w-[12px] bg-white" /><div className="w-[12px] bg-white" />
        </div>
      </div>
      <div className="leading-[16px] tracking-[-0.2px]">0.000 dB</div>
    </div>
  );
}

/* ---------- right side ---------- */

function InstrumentList() {
  const ids = ["00", "01", "02", "03", "04", "05", "06", "07", "08", "09", "0A"];
  return (
    <div className="ml-[5px] flex h-[147px] w-[211px] rounded-[5px] border-2 border-[#a8a8a8]">
      <div className="flex w-[16px] flex-col">
        <Btn className="h-4 w-[15px] rounded-[3px]"><div className="h-px w-[7px] bg-black" /></Btn>
        <Btn className="-mt-px h-4 w-[15px] rounded-[3px]"><svg width="7" height="7" stroke="#000"><path d="M0 3.5 H7 M3.5 0 V7" /></svg></Btn>
        <Btn className="mt-auto h-4 w-[15px] rounded-[3px]">
          <svg width="11" height="12" fill="none" stroke="#000"><path d="M3.5 0.5 H7.5 M3.5 11.5 H7.5 M5.5 0.5 V11.5" strokeWidth="1.5" /><path d="M0.5 3.5 L3 6 L0.5 8.5 M10.5 3.5 L8 6 L10.5 8.5" strokeWidth="1.2" /></svg>
        </Btn>
      </div>
      <div className="ml-px w-[174px]">
        {ids.map((id, i) => {
          const sel = i === 6;
          return (
            <div key={id} className={"flex h-[13px] items-center tracking-[-0.3px] " + (sel ? "rounded-[2px] bg-black text-white" : "")}>
              <span className="w-[17px] pl-[2px]">{id}</span>
              <div className="h-full w-px bg-black" />
              <div className="ml-[2px] h-[10px] w-[10px] border border-[#777] bg-[#d8d8d8]" />
              <span className="ml-[2px] flex-1">{"0" + String(i + 1).padStart(2, "0")}</span>
              <ZigZag className={"mb-[2px] mr-[3px] " + (sel ? "text-[#ddd]" : "text-[#666]")} />
            </div>
          );
        })}
      </div>
      <div className="ml-px flex w-[14px] flex-col">
        <Btn className="h-[14px] w-[14px]"><Tri d="u" className="scale-90" /></Btn>
        <div className="mt-px h-[72px] w-[14px] border border-[#666]" />
        <Btn className="mb-px mt-auto h-[14px] w-[14px]"><Tri d="d" className="scale-90" /></Btn>
      </div>
    </div>
  );
}

const files = [
  "DemoSong - Daed - Bears.xrns", "DemoSong - Danoise - LFO.xrns", "DemoSong - Dblue - Syntechti..", "DemoSong - Hunz - Soon Soo..",
  "DemoSong - It-Alien - ThePath..", "DemoSong - Medievil Music - ..", "DemoSong - Phobium - Abrup..", "DemoSong - Sunjammer - I U..",
  "Tutorial - Beat Slicing.xrns", "Tutorial - Beat Synced Wobbles..", "Tutorial - Cross-Track Routing.x..", "Tutorial - Delay Column (Huma..",
  "Tutorial - Delay Column (SubLi..", "Tutorial - Ducking (Sidechaining..", "Tutorial - Glide & Pitch.xrns", "Tutorial - Lines Per Beat.xrns",
  "Tutorial - Maybe Melodies.xrns", "Tutorial - Meta Mixer.xrns", "Tutorial - Sound Design & Met..",
];

function FileBrowser() {
  return (
    <div className="ml-[4px] mt-[5px] flex h-[605px] w-[212px] rounded-[4px] border-2 border-[#a8a8a8] pl-px pt-px">
      <div className="flex w-[16px] shrink-0 flex-col">
        <Btn className="h-4 w-4 rounded-[3px]">
          <svg width="12" height="12" fill="none" stroke="#000"><circle cx="5" cy="5" r="4" strokeWidth="1.2" /><path d="M8 8 L11 11" strokeWidth="2.2" /></svg>
        </Btn>
        <Btn className="mt-[2px] h-4 w-4 rounded-[3px]">
          <svg width="12" height="12" stroke="#000"><path d="M3 1 V5 M1 3 H5 M9 1 V5 M7 3 H11 M1.5 1.5 L4.5 4.5 M7.5 1.5 L10.5 4.5" /><path d="M6 8 V10 M5 9 H7" /></svg>
        </Btn>
      </div>
      <div className="flex flex-col whitespace-nowrap">
        <div className="flex h-[13px] items-center pl-[3px]">
          <svg width="13" height="10"><path d="M0 1 H4 L5 2 H11 V3 H13 L12 10 H0 Z" fill="#555" /><path d="M1 0 H5 V3 H0 Z" /></svg>
          <span className="ml-[6px]">..</span>
        </div>
        {files.map((f) => (
          <div key={f} className="flex h-[13px] items-center pl-[3px]">
            <svg width="6" height="8" fill="none" stroke="#333" className="mb-px"><polygon points="0.5,0.5 5,4 0.5,7.5" /></svg>
            <svg width="12" height="11" className="ml-[5px]" stroke="#000" strokeWidth="1.3">
              <path d="M4.5 9 V1 H7 M4.5 4 H7 M9 8 V1 H12 M9 4 H11" fill="none" />
              <ellipse cx="3" cy="9" rx="2" ry="1.2" /><ellipse cx="7.5" cy="8" rx="1.8" ry="1.2" />
            </svg>
            <span className={"ml-[5px] leading-[13px] " + (f.startsWith("Demo") ? "tracking-[-0.01px]" : "tracking-[-0.2px]")}>{f}</span>
          </div>
        ))}
      </div>
    </div>
  );
}

function RightPanel() {
  return (
    <div className="ml-[3px] mt-[2px] h-[870px] w-[222px] rounded-[2px] border border-[#ddd] bg-white pt-[6px]">
      <InstrumentList />
      <div className="mt-[4px] flex h-4 items-center pl-[6px]">
        <span className="w-[193px] pt-[2px] tracking-[-0.05px]">Instrument Properties</span>
        <Btn className="h-4 w-4 rounded-[3px]"><Tri d="d" /></Btn>
      </div>
      <div className="ml-[4px] mt-[6px] h-[2px] w-[213px] bg-[#8d8d8d]" />
      <div className="ml-[5px] mt-[6px] flex h-4">
        <Btn className="h-4 w-[53px] rounded-l-[4px] bg-[#bbb] pt-[2px]">Songs</Btn>
        <Btn className="-ml-px h-4 w-[53px] pt-[2px]">Instr.</Btn>
        <Btn className="-ml-px h-4 w-[53px] pt-[2px]">Samples</Btn>
        <Btn className="-ml-px h-4 w-[54px] rounded-r-[4px] pt-[2px]">Other</Btn>
      </div>
      <div className="mt-[6px] flex h-4 items-center pl-[6px]">
        <span className="w-[193px] whitespace-nowrap pt-[2px] tracking-[-0.25px]">/...james/usr/local/bin/Resources/Songs/</span>
        <Btn className="h-4 w-4"><svg width="8" height="8"><path d="M4 0 L8 4 H5.5 V8 H2.5 V4 H0 Z" /></svg></Btn>
      </div>
      <div className="ml-[4px] mt-[4px] h-[2px] w-[213px] bg-[#8d8d8d]" />
      <FileBrowser />
      <div className="ml-[4px] mt-[4px] flex items-center">
        <div className="flex h-[18px] w-[119px] items-center rounded-[5px] border-2 border-[#a8a8a8] pl-[2px] pt-[2px] tracking-[-0.1px]">pattern_jumper_demo</div>
        <Btn className="ml-[2px] h-4 w-11 pt-[2px]">Save</Btn>
        <Btn className="ml-[2px] h-4 w-11 pt-[2px]">Render</Btn>
      </div>
    </div>
  );
}

function RightStrip() {
  return (
    <div className="ml-[3px] flex h-[872px] w-[26px] flex-col">
      <div className="flex h-[48px] shrink-0 flex-col pl-[5px] pt-[7px]">
        <Btn className="h-4 w-4 rounded-[3px] bg-[#c4c4c4]"><Tri d="r" /></Btn>
        <Btn className="mt-[4px] h-4 w-4 rounded-[3px] bg-[#c4c4c4]">
          <svg width="10" height="9"><path d="M0 1 H2 M0 4.5 H2 M0 8 H2 M3.5 1 H10 M3.5 4.5 H10 M3.5 8 H10" stroke="#000" strokeWidth="2" /></svg>
        </Btn>
      </div>
      <div className="flex flex-1 flex-col border-r border-[#ddd] bg-white pl-[5px] pt-[142px]">
        <div className="flex flex-col gap-[2px]">
          {[1, 2, 3, 4].map((n) => <Preset key={n} n={n} className="h-4 w-4 border-[#999] text-[#888]" />)}
        </div>
        <div className="-ml-px mt-[6px] h-px w-[18px] bg-[#bbb]" />
        <div className="mt-[6px] flex flex-col gap-[2px]">
          <Btn className="h-4 w-4"><svg width="10" height="8"><path d="M1 7.5 L9 1" stroke="#000" strokeWidth="1.4" /></svg></Btn>
          <Btn className="h-4 w-4"><svg width="12" height="10" fill="none" stroke="#000"><path d="M0.5 9.5 V5.5 L3 1.5 Q6 0 9 1.5 L11.5 5.5 V9.5 Z M0.5 5.5 H11.5" /></svg></Btn>
          <Btn className="h-4 w-4"><svg width="12" height="11" fill="none" stroke="#000"><path d="M0.5 6 L6 0.8 L11.5 6 M2.5 5 V10.5 H9.5 V5 M5 10 V7 H7 V10" /></svg></Btn>
          <Btn className="h-4 w-4"><svg width="12" height="11" fill="none" stroke="#000" strokeWidth="1.5"><path d="M1 1 H3.5 V10 H1 Z M5.5 1 H8 V10 H5.5 Z" /><path d="M10.8 5 V11" strokeWidth="2" /></svg></Btn>
        </div>
      </div>
    </div>
  );
}

function StatusBar() {
  return (
    <div className="flex h-[24px] items-center">
      <Btn className="ml-[3px] h-4 w-[15px] rounded-[3px] bg-[#bbb]"><Tri d="d" className="scale-75" /></Btn>
      <Btn className="ml-[7px] h-4 w-[54px] rounded-l-[4px] bg-[#bbb]">
        <svg width="27" height="10" fill="#777" stroke="#333"><path d="M6 5 H20" /><rect x="0.5" y="0.5" width="6" height="8" rx="1" /><rect x="9.5" y="0.5" width="6" height="8" rx="1" /><rect x="18.5" y="0.5" width="6" height="8" rx="1" /></svg>
      </Btn>
      <Btn className="h-4 w-[54px] rounded-r-[4px] bg-white">
        <svg width="26" height="12" fill="none" stroke="#000"><path d="M2 10 L8 3 L15 10 L22 2" strokeWidth="0.7" /><g fill="#000" stroke="none"><circle cx="2" cy="10" r="1.8" /><circle cx="8" cy="3" r="1.8" /><circle cx="15" cy="10" r="1.8" /><circle cx="22" cy="2" r="1.8" /></g></svg>
      </Btn>
      <div className="ml-[5px] flex h-[22px] flex-1 items-center justify-end border border-[#ddd] bg-white">
        <span className="w-[108px] shrink-0 origin-left scale-x-[1.48] text-[16px] font-bold leading-[16px] [-webkit-text-stroke:0.6px_#000]">
          renoise
        </span>
        <svg width="11" height="11" className="self-end" stroke="#888"><path d="M0 11 L11 0 M4 11 L11 4 M8 11 L11 8" /></svg>
      </div>
    </div>
  );
}

export default function App() {
  return (
    <div className="h-[977px] w-[1425px] overflow-hidden bg-[#8b8b8b] pl-[3px] pt-[3px] font-['DejaVu_Sans','Liberation_Sans',sans-serif] text-[10px] leading-[12px] text-black">
      <TitleBar />
      <Transport />
      <div className="flex h-[873px]">
        <div className="flex w-[1165px] flex-col">
          <Tabs />
          <div className="flex h-[844px] w-[1165px] flex-col rounded-[2px] border border-[#c8c8c8] bg-white pl-[5px] pt-[5px] [&_span]:pt-[2px]">
            <div className="flex gap-[5px]">
              <Matrix />
              <div className="flex flex-col">
                <PatternEditor />
                <PatternToolbar />
              </div>
            </div>
            <div className="mt-[5px] h-[2px] w-[1154px] shrink-0 bg-[#8d8d8d]" />
            <div className="mt-[5px] flex">
              <Browser />
              <TrackDevice />
              <MixerStrip />
            </div>
          </div>
        </div>
        <RightPanel />
        <RightStrip />
      </div>
      <div className="w-[1419px]">
        <StatusBar />
      </div>
    </div>
  );
}
